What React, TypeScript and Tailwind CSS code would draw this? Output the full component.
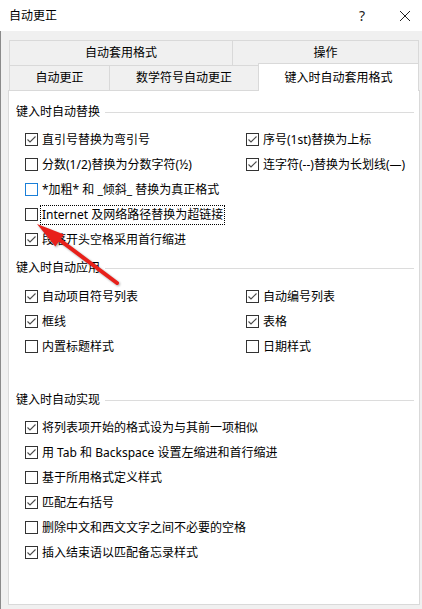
import React from "react"

type Item = { label: string; checked: boolean; focusBox?: boolean; blue?: boolean }

function Box({ checked, blue }: { checked: boolean; blue?: boolean }) {
    return (
        <span
            className={`w-[13px] h-[13px] shrink-0 bg-white border flex items-center justify-center ${
                blue ? "border-[#1a7fd8]" : "border-[#333333]"
            }`}
        >
            {checked && (
                <svg width="11" height="11" viewBox="0 0 11 11">
                    <polyline points="1.5,5.5 4,8 9.5,2.5" fill="none" stroke="#4a4a4a" strokeWidth="1.1" />
                </svg>
            )}
        </span>
    )
}

function Check({ item }: { item: Item }) {
    return (
        <div className="h-[25px] flex items-center">
            <Box checked={item.checked} blue={item.blue} />
            {item.focusBox ? (
                <span className="ml-[2px] px-[1px] h-[20px] flex items-center border border-dotted border-black">
                    {item.label}
                </span>
            ) : (
                <span className="ml-[4px]">{item.label}</span>
            )}
        </div>
    )
}

function Heading({ text }: { text: string }) {
    return (
        <div className="h-[20px] flex items-center pl-[7px] pr-[5px]">
            <span>{text}</span>
            <div className="flex-1 ml-[5px] h-px bg-[#dcdcdc]" />
        </div>
    )
}

const replaceLeft: Item[] = [
    { label: "直引号替换为弯引号", checked: true },
    { label: "分数(1/2)替换为分数字符(½)", checked: false },
    { label: "*加粗* 和 _倾斜_ 替换为真正格式", checked: false, blue: true },
    { label: "Internet 及网络路径替换为超链接", checked: false, focusBox: true },
    { label: "段落开头空格采用首行缩进", checked: true },
]
const replaceRight: Item[] = [
    { label: "序号(1st)替换为上标", checked: true },
    { label: "连字符(--)替换为长划线(—)", checked: true },
]
const applyLeft: Item[] = [
    { label: "自动项目符号列表", checked: true },
    { label: "框线", checked: true },
    { label: "内置标题样式", checked: false },
]
const applyRight: Item[] = [
    { label: "自动编号列表", checked: true },
    { label: "表格", checked: true },
    { label: "日期样式", checked: false },
]
const doItems: Item[] = [
    { label: "将列表项开始的格式设为与其前一项相似", checked: true },
    { label: "用 Tab 和 Backspace 设置左缩进和首行缩进", checked: true },
    { label: "基于所用格式定义样式", checked: false },
    { label: "匹配左右括号", checked: true },
    { label: "删除中文和西文文字之间不必要的空格", checked: false },
    { label: "插入结束语以匹配备忘录样式", checked: true },
]

export default function App() {
    return (
        <div className="relative w-[422px] h-[609px] overflow-hidden bg-[#f0f0f0] text-[12px] leading-[16px] text-black font-[family-name:'Noto_Sans','Noto_Sans_CJK_SC',sans-serif]">
            {/* Title bar */}
            <div className="h-[31px] bg-white flex items-center pl-[9px]">
                <span>自动更正</span>
                <span className="ml-auto mr-[34px] text-[14px] text-[#222]">?</span>
                <svg width="12" height="12" viewBox="0 0 12 12" className="mr-[11px]">
                    <path d="M1 1 L11 11 M11 1 L1 11" stroke="#222" strokeWidth="1" />
                </svg>
            </div>

            {/* Body */}
            <div className="h-[578px] border-l border-[#8a8a8a] pt-[9px]">
                {/* Tabs row 1 */}
                <div className="flex h-[25px] ml-[8px] w-[410px]">
                    <div className="w-[223px] flex items-center justify-center border-t border-l border-[#d9d9d9]">自动套用格式</div>
                    <div className="flex-1 flex items-center justify-center border-t border-l border-r border-[#d9d9d9]">操作</div>
                </div>
                {/* Tabs row 2 */}
                <div className="flex h-[25px] ml-[8px] w-[410px] relative z-10">
                    <div className="w-[100px] flex items-center justify-center border-t border-l border-[#d9d9d9]">自动更正</div>
                    <div className="w-[149px] flex items-center justify-center border-t border-l border-[#d9d9d9]">数学符号自动更正</div>
                    <div className="flex-1 -mt-[2px] h-[28px] bg-white flex items-center justify-center border-t border-l border-r border-[#d9d9d9]">
                        键入时自动套用格式
                    </div>
                </div>

                {/* Panel */}
                <div className="ml-[7px] w-[412px] h-[515px] bg-white border border-[#d9d9d9] pt-[11px]">
                    <Heading text="键入时自动替换" />
                    <div className="grid grid-cols-[221px_1fr] pl-[16px] mt-[5px]">
                        <div>
                            {replaceLeft.map((it) => (
                                <Check key={it.label} item={it} />
                            ))}
                        </div>
                        <div>
                            {replaceRight.map((it) => (
                                <Check key={it.label} item={it} />
                            ))}
                        </div>
                    </div>

                    <div className="mt-[6px]">
                        <Heading text="键入时自动应用" />
                    </div>
                    <div className="grid grid-cols-[221px_1fr] pl-[16px] mt-[6px]">
                        <div>
                            {applyLeft.map((it) => (
                                <Check key={it.label} item={it} />
                            ))}
                        </div>
                        <div>
                            {applyRight.map((it) => (
                                <Check key={it.label} item={it} />
                            ))}
                        </div>
                    </div>

                    <div className="mt-[31px]">
                        <Heading text="键入时自动实现" />
                    </div>
                    <div className="pl-[16px] mt-[5px]">
                        {doItems.map((it) => (
                            <Check key={it.label} item={it} />
                        ))}
                    </div>
                </div>
            </div>

            {/* Red annotation arrow */}
            <svg className="absolute left-0 top-0 pointer-events-none" width="422" height="609" viewBox="0 0 422 609">
                <g style={{ filter: "drop-shadow(1px 1px 1px rgba(0,0,0,0.35))" }}>
                    <line x1="117" y1="283" x2="57" y2="238" stroke="#e8201a" strokeWidth="4" strokeLinecap="round" />
                    <polygon points="37,224 64,234.5 55.3,246.5" fill="#e8201a" />
                </g>
            </svg>
        </div>
    )
}
